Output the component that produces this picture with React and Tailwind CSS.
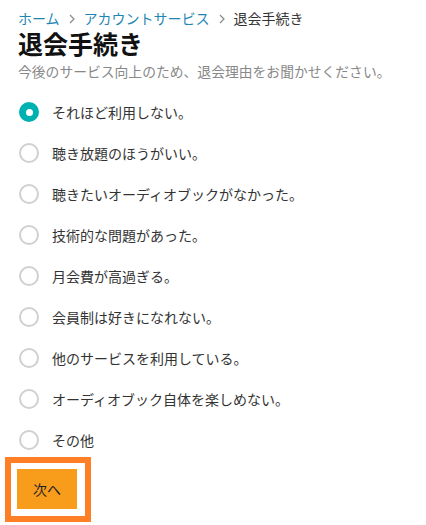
import React, { useState } from "react";

const options = [
  "それほど利用しない。",
  "聴き放題のほうがいい。",
  "聴きたいオーディオブックがなかった。",
  "技術的な問題があった。",
  "月会費が高過ぎる。",
  "会員制は好きになれない。",
  "他のサービスを利用している。",
  "オーディオブック自体を楽しめない。",
  "その他",
];

function Chevron() {
  return (
    <svg className="mx-[9px] mt-[2px]" width="6" height="10" viewBox="0 0 6 10" fill="none">
      <path d="M1 1l4 4-4 4" stroke="#888" strokeWidth="1.2" />
    </svg>
  );
}

export default function App() {
  const [sel, setSel] = useState(0);
  return (
    <div
      className="bg-white w-[426px] h-[525px] overflow-hidden pl-[18px] pt-[8px] text-[#333]"
      style={{ fontFamily: '"Noto Sans CJK JP", "Noto Sans", sans-serif' }}
    >
      <nav className="flex items-center h-[20px] text-[14px] leading-[20px]">
        <a className="text-[#1f86b3]">ホーム</a>
        <Chevron />
        <a className="text-[#1f86b3]">アカウントサービス</a>
        <Chevron />
        <span className="text-[#333]">退会手続き</span>
      </nav>
      <h1 className="text-[25px] leading-[30px] font-bold text-[#111]">退会手続き</h1>
      <p className="mt-[3px] text-[13.8px] leading-[20px] text-[#888]">
        今後のサービス向上のため、退会理由をお聞かせください。
      </p>
      <div className="mt-[21px] flex flex-col gap-[21px]">
        {options.map((o, i) => (
          <label key={i} className="flex items-center h-[20px] cursor-pointer" onClick={() => setSel(i)}>
            {sel === i ? (
              <span className="ml-[1px] w-[20px] h-[20px] rounded-full bg-[#00b1b1] flex items-center justify-center">
                <span className="w-[7px] h-[7px] rounded-full bg-white"></span>
              </span>
            ) : (
              <span className="ml-[1px] w-[20px] h-[20px] rounded-full border-2 border-[#d0d0d0] bg-white"></span>
            )}
            <span className="ml-[13px] text-[14px] leading-[20px] text-[#333]">{o}</span>
          </label>
        ))}
      </div>
      <div className="mt-[7px] -ml-[13px] inline-block border-[6px] border-[#ff7f27] pl-[6px] pr-[8px] pt-[6px] pb-[7px]">
        <button className="w-[60px] h-[40px] bg-[#f89c1c] text-[14px] text-[#222] flex items-center justify-center">
          次へ
        </button>
      </div>
    </div>
  );
}
